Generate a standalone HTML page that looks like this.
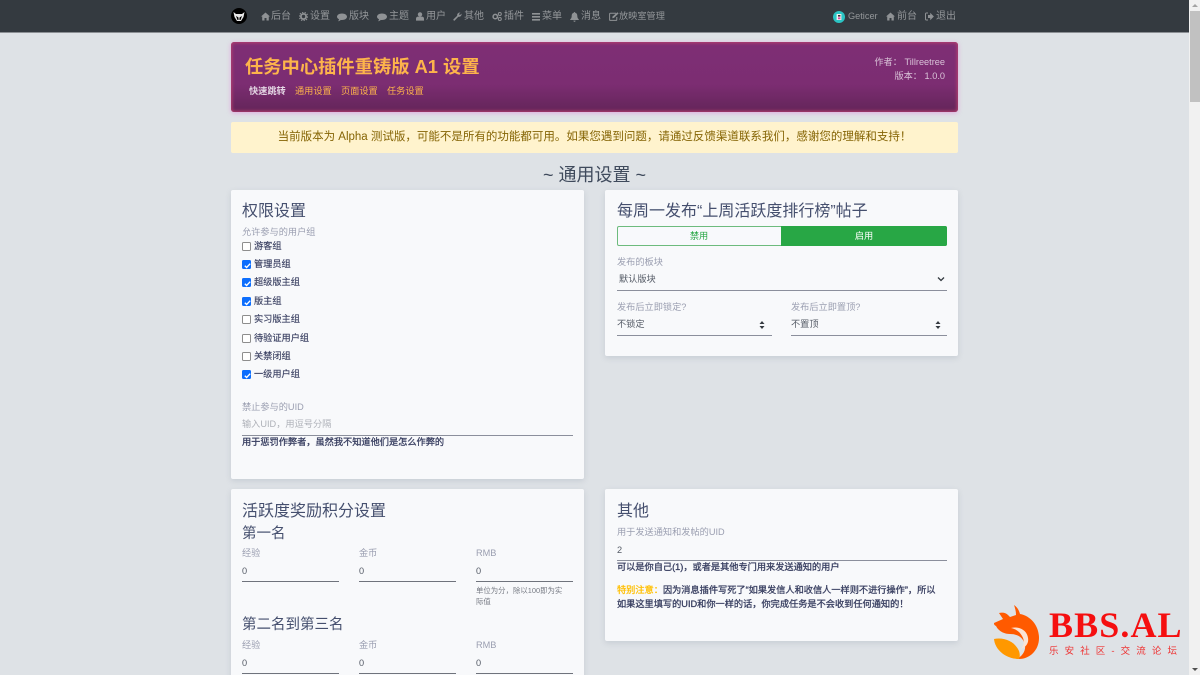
<!DOCTYPE html>
<html lang="zh"><head><meta charset="utf-8"><title>任务中心插件重铸版 A1 设置</title>
<style>
html,body{margin:0;padding:0;width:1200px;height:675px;overflow:hidden;background:#dee2e6;font-family:"Liberation Sans","Noto Sans CJK SC",sans-serif;}
#w{position:relative;width:1200px;height:675px;overflow:hidden;}
.t{position:absolute;white-space:nowrap;line-height:1;margin-top:1px;}
.a{position:absolute;}
.nav{color:#94979a;font-size:10px;}
.card{position:absolute;background:#f8f9fb;border-radius:2px;box-shadow:0 2px 6px rgba(120,130,150,.22);}
.h{color:#454f6e;font-size:16px;}
.h2{color:#454f6e;font-size:14.5px;}
.l{color:#9a9eb0;font-size:9.2px;}
.v{color:#555b66;font-size:9.2px;}
.b{color:#3a4062;font-size:9.2px;-webkit-text-stroke:.3px #3a4062;}
.cbt{color:#3c4263;font-size:9.2px;-webkit-text-stroke:.15px #3c4263;}
.line{position:absolute;height:1px;background:#8b8f9c;}
.cb{position:absolute;width:9px;height:9px;box-sizing:border-box;border:1px solid #8d8d8d;border-radius:1.5px;background:#fff;}
.cb.on{background:#0d6efd;border-color:#0d6efd;}
.cb.on svg{position:absolute;left:-.5px;top:-.5px;}
svg.i{position:absolute;fill:#8f9295;margin-top:.5px;}
</style></head><body><div id="w">

<!-- navbar -->
<div class="a" style="left:0;top:0;width:1189px;height:33px;background:#343a40;border-bottom:1px solid #8b8f94;box-sizing:border-box;"></div>
<svg class="a" style="left:231px;top:8px" width="16" height="16" viewBox="0 0 16 16"><circle cx="8" cy="8" r="8" fill="#000"/><path d="M2.5 4 L5 6 H11 L13.5 4 L12.5 9 L10 13 H6 L3.5 9Z" fill="#e8e8e8"/><path d="M5 8 L7.5 9.5 V12 H6.5Z M11 8 L8.5 9.5 V12 H9.5Z" fill="#000"/></svg>

<svg class="i" style="left:261px;top:11px" width="9" height="9" viewBox="0 0 9 9"><path d="M4.5 .5 L9 4.5 H7.8 V8.5 H5.5 V6 H3.5 V8.5 H1.2 V4.5 H0Z"/></svg>
<div class="t nav" style="left:271px;top:11px">后台</div>
<svg class="i" style="left:299px;top:11px" width="9" height="9" viewBox="0 0 9 9"><circle cx="4.5" cy="4.5" r="2.6" fill="none" stroke="#8f9295" stroke-width="1.8"/><circle cx="4.5" cy="4.5" r="4.2" fill="none" stroke="#8f9295" stroke-width="1.1" stroke-dasharray="1.3 1.3"/></svg>
<div class="t nav" style="left:310px;top:11px">设置</div>
<svg class="i" style="left:337px;top:12px" width="10" height="9" viewBox="0 0 10 9"><path d="M5 .5C7.7.5 10 1.9 10 3.8S7.7 7 5 7C4.6 7 4.2 7 3.8 6.9 3 7.8 1.8 8.2 1 8.3 1.6 7.6 2 7 2 6.3.8 5.7 0 4.8 0 3.8 0 1.9 2.3.5 5 .5Z"/></svg>
<div class="t nav" style="left:349px;top:11px">版块</div>
<svg class="i" style="left:377px;top:12px" width="10" height="9" viewBox="0 0 10 9"><path d="M5 .5C7.7.5 10 1.9 10 3.8S7.7 7 5 7C4.6 7 4.2 7 3.8 6.9 3 7.8 1.8 8.2 1 8.3 1.6 7.6 2 7 2 6.3.8 5.7 0 4.8 0 3.8 0 1.9 2.3.5 5 .5Z"/></svg>
<div class="t nav" style="left:389px;top:11px">主题</div>
<svg class="i" style="left:416px;top:11px" width="8" height="9" viewBox="0 0 8 9"><circle cx="4" cy="2.4" r="2.2"/><path d="M0 8.6V6.6C0 5.3 1 4.6 2 4.6H6C7 4.6 8 5.3 8 6.6V8.6Z"/></svg>
<div class="t nav" style="left:426px;top:11px">用户</div>
<svg class="i" style="left:453px;top:11px" width="9" height="9" viewBox="0 0 9 9"><path d="M.4 7.4 L4.2 3.7 C3.9 2 5.2 .3 7.4.5 L5.9 2.1 6.9 3.1 8.6 1.6 C8.8 3.8 7 5.1 5.3 4.8 L1.6 8.6 C1 9 0 8 .4 7.4Z"/></svg>
<div class="t nav" style="left:464px;top:11px">其他</div>
<svg class="i" style="left:492px;top:11px" width="10" height="9" viewBox="0 0 10 9"><circle cx="3.3" cy="4.6" r="2.2" fill="none" stroke="#8f9295" stroke-width="1.5"/><circle cx="7.8" cy="2" r="1.5" fill="none" stroke="#8f9295" stroke-width="1"/><circle cx="7.8" cy="7" r="1.5" fill="none" stroke="#8f9295" stroke-width="1"/></svg>
<div class="t nav" style="left:504px;top:11px">插件</div>
<svg class="i" style="left:532px;top:12px" width="8" height="8" viewBox="0 0 8 8"><path d="M0 0H8V1.6H0ZM0 3H8V4.6H0ZM0 6H8V7.6H0Z"/></svg>
<div class="t nav" style="left:542px;top:11px">菜单</div>
<svg class="i" style="left:570px;top:11px" width="9" height="10" viewBox="0 0 9 10"><path d="M4.5 0C5 0 5.2.4 5.2.8 6.8 1.2 7.3 2.5 7.3 4 7.3 5.8 8 6.6 8.8 7.4V8H.2V7.4C1 6.6 1.7 5.8 1.7 4 1.7 2.5 2.2 1.2 3.8.8 3.8.4 4 0 4.5 0ZM3.4 8.6H5.6C5.6 9.3 5.1 9.8 4.5 9.8S3.4 9.3 3.4 8.6Z"/></svg>
<div class="t nav" style="left:581px;top:11px">消息</div>
<svg class="i" style="left:609px;top:11px" width="10" height="9" viewBox="0 0 10 9"><path d="M7 1.2H1.4C.9 1.2.6 1.5.6 2V7.6C.6 8.1.9 8.4 1.4 8.4H7C7.5 8.4 7.8 8.1 7.8 7.6V5" fill="none" stroke="#8f9295"/><path d="M3.5 4.6 8.4.2 9.6 1.4 5 5.9 3.3 6.2Z"/></svg>
<div class="t nav" style="left:619px;top:11px;font-size:9.2px">放映室管理</div>

<svg class="a" style="left:833px;top:11px" width="12" height="12" viewBox="0 0 12 12"><circle cx="6" cy="6" r="6" fill="#2bc4c4"/><rect x="3.6" y="3" width="4.8" height="6" fill="#f0f0f0"/><rect x="5" y="4" width="2.4" height="1.6" fill="#333"/><rect x="5" y="6.4" width="2.4" height="1.8" fill="#e0409a"/></svg>
<div class="t nav" style="left:848px;top:11px;font-size:9.2px">Geticer</div>
<svg class="i" style="left:886px;top:11px" width="9" height="9" viewBox="0 0 9 9"><path d="M4.5 .5 L9 4.5 H7.8 V8.5 H5.5 V6 H3.5 V8.5 H1.2 V4.5 H0Z"/></svg>
<div class="t nav" style="left:897px;top:11px">前台</div>
<svg class="i" style="left:925px;top:11px" width="9" height="9" viewBox="0 0 9 9"><path d="M3 1H1.4C.8 1 .5 1.4.5 2V7C.5 7.6.8 8 1.4 8H3" fill="none" stroke="#8f9295"/><path d="M3 3H5.2V.8L8.9 4.5 5.2 8.2V6H3Z"/></svg>
<div class="t nav" style="left:936px;top:11px">退出</div>

<!-- scrollbar -->
<div class="a" style="left:1189px;top:0;width:11px;height:675px;background:#f1f1f1;"></div>
<div class="a" style="left:1190px;top:11px;width:10px;height:91px;background:#c1c1c1;"></div>
<div class="a" style="left:1192px;top:4px;width:0;height:0;border-left:3px solid transparent;border-right:3px solid transparent;border-bottom:3px solid #a3a3a3;"></div>
<div class="a" style="left:1192px;top:668px;width:0;height:0;border-left:3px solid transparent;border-right:3px solid transparent;border-top:3px solid #505050;"></div>

<!-- banner -->
<div class="a" style="left:231px;top:42px;width:727px;height:70px;box-sizing:border-box;border-radius:3px;background:linear-gradient(180deg,#7e2e75 0%,#7c2d72 60%,#632559 100%);box-shadow:inset 0 0 3px 1px #b8406e,0 1px 5px rgba(225,120,215,.55);"></div>
<div class="t" style="left:245px;top:57px;font-size:18.3px;font-weight:bold;color:#fdb44b;">任务中心插件重铸版 A1 设置</div>
<div class="t" style="left:249px;top:86px;font-size:9.2px;font-weight:bold;color:#e4d6e4;">快速跳转</div>
<div class="t" style="left:295px;top:86px;font-size:9.2px;color:#fdb44b;">通用设置</div>
<div class="t" style="left:341px;top:86px;font-size:9.2px;color:#fdb44b;">页面设置</div>
<div class="t" style="left:387px;top:86px;font-size:9.2px;color:#fdb44b;">任务设置</div>
<div class="t" style="right:255px;top:57px;font-size:9.2px;color:#d9c3d8;">作者： Tillreetree</div>
<div class="t" style="right:255px;top:71px;font-size:9.2px;color:#d9c3d8;">版本： 1.0.0</div>

<!-- alert -->
<div class="a" style="left:231px;top:122px;width:727px;height:31px;background:#fff3cd;border-radius:2px;"></div>
<div class="t" style="left:231px;width:727px;text-align:center;top:131px;font-size:11.5px;color:#856404;">当前版本为 Alpha 测试版，可能不是所有的功能都可用。如果您遇到问题，请通过反馈渠道联系我们，感谢您的理解和支持！</div>

<div class="t" style="left:231px;width:727px;text-align:center;top:165px;font-size:18px;color:#3f4a5c;">~ 通用设置 ~</div>

<!-- card 1 -->
<div class="card" style="left:231px;top:190px;width:353px;height:289px;"></div>
<div class="t h" style="left:242px;top:203px">权限设置</div>
<div class="t l" style="left:242px;top:227px">允许参与的用户组</div>

<div class="cb" style="left:242px;top:242px"></div><div class="t cbt" style="left:254px;top:241px">游客组</div>
<div class="cb on" style="left:242px;top:260px"><svg width="9" height="9" viewBox="0 0 8 8"><path d="M1.6 4.2 3.2 5.8 6.4 2.4" fill="none" stroke="#fff" stroke-width="1.2"/></svg></div><div class="t cbt" style="left:254px;top:259px">管理员组</div>
<div class="cb on" style="left:242px;top:278px"><svg width="9" height="9" viewBox="0 0 8 8"><path d="M1.6 4.2 3.2 5.8 6.4 2.4" fill="none" stroke="#fff" stroke-width="1.2"/></svg></div><div class="t cbt" style="left:254px;top:277px">超级版主组</div>
<div class="cb on" style="left:242px;top:297px"><svg width="9" height="9" viewBox="0 0 8 8"><path d="M1.6 4.2 3.2 5.8 6.4 2.4" fill="none" stroke="#fff" stroke-width="1.2"/></svg></div><div class="t cbt" style="left:254px;top:296px">版主组</div>
<div class="cb" style="left:242px;top:315px"></div><div class="t cbt" style="left:254px;top:314px">实习版主组</div>
<div class="cb" style="left:242px;top:334px"></div><div class="t cbt" style="left:254px;top:333px">待验证用户组</div>
<div class="cb" style="left:242px;top:352px"></div><div class="t cbt" style="left:254px;top:351px">关禁闭组</div>
<div class="cb on" style="left:242px;top:370px"><svg width="9" height="9" viewBox="0 0 8 8"><path d="M1.6 4.2 3.2 5.8 6.4 2.4" fill="none" stroke="#fff" stroke-width="1.2"/></svg></div><div class="t cbt" style="left:254px;top:369px">一级用户组</div>

<div class="t l" style="left:242px;top:402px">禁止参与的UID</div>
<div class="t" style="left:242px;top:419px;font-size:9.2px;color:#aeb1b8;">输入UID，用逗号分隔</div>
<div class="line" style="left:242px;top:435px;width:331px"></div>
<div class="t b" style="left:242px;top:437px">用于惩罚作弊者，虽然我不知道他们是怎么作弊的</div>

<!-- card 2 -->
<div class="card" style="left:605px;top:190px;width:353px;height:166px;"></div>
<div class="t h" style="left:617px;top:203px">每周一发布“上周活跃度排行榜”帖子</div>
<div class="a" style="left:617px;top:226px;width:330px;height:20px;box-sizing:border-box;border:1px solid #6dbb7d;border-radius:2px;background:#f8f9fc;"></div>
<div class="a" style="left:781px;top:226px;width:166px;height:20px;background:#28a745;border-radius:0 2px 2px 0;"></div>
<div class="t" style="left:617px;width:164px;text-align:center;top:231px;font-size:9.2px;color:#28a745;">禁用</div>
<div class="t" style="left:781px;width:166px;text-align:center;top:231px;font-size:9.2px;color:#fff;">启用</div>

<div class="t l" style="left:617px;top:257px">发布的板块</div>
<div class="t v" style="left:619px;top:274px">默认版块</div>
<svg class="a" style="left:937px;top:276px" width="8" height="6" viewBox="0 0 8 6"><path d="M1 1.5 4 4.5 7 1.5" fill="none" stroke="#343a40" stroke-width="1.3"/></svg>
<div class="line" style="left:617px;top:290px;width:330px"></div>

<div class="t l" style="left:617px;top:302px">发布后立即锁定?</div>
<div class="t l" style="left:791px;top:302px">发布后立即置顶?</div>
<div class="t v" style="left:617px;top:319px">不锁定</div>
<div class="t v" style="left:791px;top:319px">不置顶</div>
<svg class="a" style="left:759px;top:321px" width="6" height="8" viewBox="0 0 6 8"><path d="M3 0 5.5 3H.5ZM3 8 .5 5H5.5Z" fill="#343a40"/></svg>
<svg class="a" style="left:935px;top:321px" width="6" height="8" viewBox="0 0 6 8"><path d="M3 0 5.5 3H.5ZM3 8 .5 5H5.5Z" fill="#343a40"/></svg>
<div class="line" style="left:617px;top:335px;width:155px"></div>
<div class="line" style="left:791px;top:335px;width:156px"></div>

<!-- card 3 -->
<div class="card" style="left:231px;top:489px;width:353px;height:200px;"></div>
<div class="t h" style="left:242px;top:503px">活跃度奖励积分设置</div>
<div class="t h2" style="left:242px;top:526px">第一名</div>
<div class="t l" style="left:242px;top:548px">经验</div>
<div class="t l" style="left:359px;top:548px">金币</div>
<div class="t l" style="left:476px;top:548px">RMB</div>
<div class="t v" style="left:242px;top:566px">0</div>
<div class="t v" style="left:359px;top:566px">0</div>
<div class="t v" style="left:476px;top:566px">0</div>
<div class="line" style="left:242px;top:581px;width:97px;background:#6f737c"></div>
<div class="line" style="left:359px;top:581px;width:97px;background:#6f737c"></div>
<div class="line" style="left:476px;top:581px;width:97px;background:#6f737c"></div>
<div class="t" style="left:476px;top:586px;font-size:7.4px;color:#777b84;">单位为分，除以100即为实</div>
<div class="t" style="left:476px;top:597px;font-size:7.4px;color:#777b84;">际值</div>
<div class="t h2" style="left:242px;top:617px">第二名到第三名</div>
<div class="t l" style="left:242px;top:640px">经验</div>
<div class="t l" style="left:359px;top:640px">金币</div>
<div class="t l" style="left:476px;top:640px">RMB</div>
<div class="t v" style="left:242px;top:658px">0</div>
<div class="t v" style="left:359px;top:658px">0</div>
<div class="t v" style="left:476px;top:658px">0</div>
<div class="line" style="left:242px;top:673px;width:97px;background:#6f737c"></div>
<div class="line" style="left:359px;top:673px;width:97px;background:#6f737c"></div>
<div class="line" style="left:476px;top:673px;width:97px;background:#6f737c"></div>

<!-- card 4 -->
<div class="card" style="left:605px;top:489px;width:353px;height:152px;"></div>
<div class="t h" style="left:617px;top:503px">其他</div>
<div class="t l" style="left:617px;top:527px">用于发送通知和发帖的UID</div>
<div class="t v" style="left:617px;top:545px">2</div>
<div class="line" style="left:617px;top:560px;width:330px"></div>
<div class="t b" style="left:617px;top:562px">可以是你自己(1)，或者是其他专门用来发送通知的用户</div>
<div class="t b" style="left:617px;top:585px"><span style="color:#ffc107;-webkit-text-stroke:.3px #ffc107">特别注意：</span>因为消息插件写死了“如果发信人和收信人一样则不进行操作”，所以</div>
<div class="t b" style="left:617px;top:599px">如果这里填写的UID和你一样的话，你完成任务是不会收到任何通知的！</div>

<!-- watermark -->
<svg class="a" style="left:993px;top:604px" width="48" height="56" viewBox="0 0 48 56">
<path d="M21 1 C24 3 26 6 27 10 C38 12 46 22 46 34 C46 46 37 55 26 55 C25 55 24 55 23 55 C31 52 34 44 31 38 C29 33 24 30 17 30 C12 30 6 28 3 22 C1 21 1 20 1 19 L10 15 L6 9 C10 8 13 9 15 11 L17 13 L23 11 C23 7 22 4 21 1Z" fill="#ff5a00"/>
<path d="M18 24 C26 22 34 26 35 34 C36 39 33 43 28 45 C31 41 32 37 29 32 C27 28 23 25 18 24Z" fill="#fbe3d4"/>
<path d="M1 35 C12 33 22 38 26 47 C27 50 27 53 26 55 C13 55 2 46 1 35Z" fill="#ff9800"/>
</svg>
<div class="t" style="left:1049px;top:606px;font-family:'Liberation Serif','Noto Serif CJK SC',serif;font-weight:bold;font-size:36px;color:#f50f10;letter-spacing:1.1px;">BBS.AL</div>
<div class="t" style="left:1049px;top:646px;font-size:9.5px;color:#ee3333;letter-spacing:6.1px;">乐安社区-交流论坛</div>

</div></body></html>
